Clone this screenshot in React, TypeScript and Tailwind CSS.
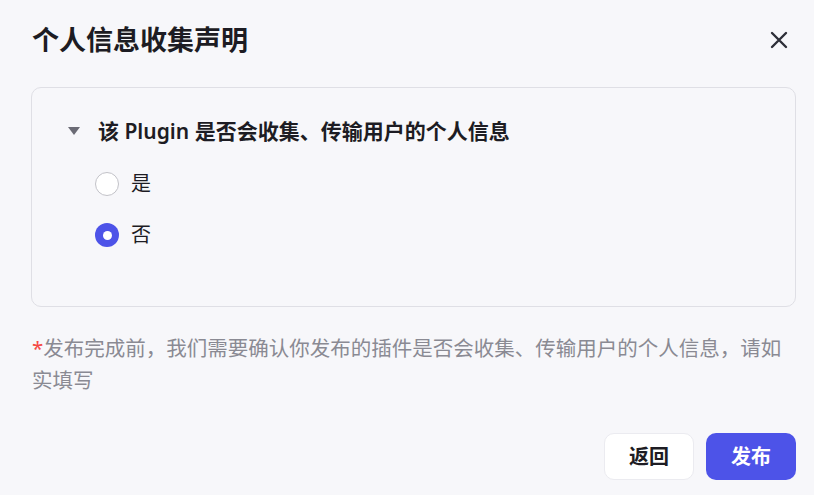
import { useState } from 'react';

const font = '"Noto Sans", "Noto Sans CJK SC", sans-serif';

function Radio({ checked, label, onClick }: { checked: boolean; label: string; onClick: () => void }) {
  return (
    <button type="button" onClick={onClick} className="flex items-center gap-3 text-left">
      {checked ? (
        <span className="w-6 h-6 rounded-full bg-[#4d53e8] flex items-center justify-center">
          <span className="w-[9px] h-[9px] rounded-full bg-white" />
        </span>
      ) : (
        <span className="w-6 h-6 rounded-full border-[1.5px] border-[#c2c2c8] bg-white" />
      )}
      <span className="text-[20px] leading-6 text-[#1d1c23]">{label}</span>
    </button>
  );
}

export default function App() {
  const [value, setValue] = useState<'yes' | 'no'>('no');

  return (
    <div className="w-[814px] h-[495px] bg-[#f7f7fa] pl-8 pr-[18px] pt-[24px]" style={{ fontFamily: font }}>
      {/* Header */}
      <div className="flex items-center justify-between h-[32px]">
        <h1 className="text-[27px] font-bold text-[#1d1c23] leading-8">个人信息收集声明</h1>
        <button type="button" className="w-6 h-6 flex items-center justify-center text-[#2e2f38] mr-[5px]">
          <svg width="18" height="18" viewBox="0 0 18 18" fill="none" stroke="currentColor" strokeWidth="2.4" strokeLinecap="round">
            <path d="M2 2l14 14M16 2L2 16" />
          </svg>
        </button>
      </div>

      {/* Question card */}
      <div className="-ml-px mt-[31px] h-[220px] border border-[#dfdfe5] rounded-[10px] pl-9 pr-6 pt-[31px]">
        <div className="flex items-center gap-[18px]">
          <svg width="12" height="9" viewBox="0 0 12 9" className="text-[#6b6b75]">
            <path d="M0 0h12L6 8z" fill="currentColor" />
          </svg>
          <span className="text-[21px] font-semibold text-[#1d1c23] leading-6">
            该 Plugin 是否会收集、传输用户的个人信息
          </span>
        </div>
        <div className="flex flex-col gap-[27px] mt-[29px] pl-[27px]">
          <Radio checked={value === 'yes'} label="是" onClick={() => setValue('yes')} />
          <Radio checked={value === 'no'} label="否" onClick={() => setValue('no')} />
        </div>
      </div>

      {/* Footnote */}
      <p className="mt-[25px] text-[20.5px] leading-8 text-[#8a8a93]">
        <span className="text-[#f54a45]">*</span>
        发布完成前，我们需要确认你发布的插件是否会收集、传输用户的个人信息，请如实填写
      </p>

      {/* Actions */}
      <div className="flex justify-end gap-3 mt-[37px]">
        <button
          type="button"
          className="w-[90px] h-[47px] rounded-[10px] bg-white border border-[#ebebf0] text-[20px] font-bold text-[#1d1c23]"
        >
          返回
        </button>
        <button
          type="button"
          className="w-[90px] h-[47px] rounded-[10px] bg-[#4d53e8] text-[20px] font-bold text-white"
        >
          发布
        </button>
      </div>
    </div>
  );
}
